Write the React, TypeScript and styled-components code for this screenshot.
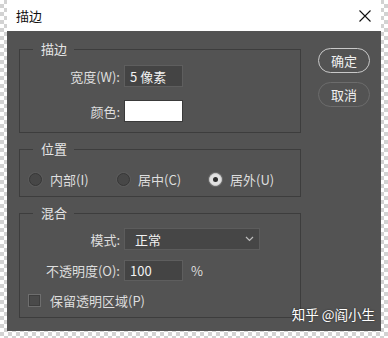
import React from "react";
import styled, { createGlobalStyle } from "styled-components";

const Global = createGlobalStyle`
  html, body { margin: 0; padding: 0; }
  body {
    width: 388px;
    height: 338px;
    overflow: hidden;
    background: repeating-conic-gradient(#d2d2d2 0 25%, #ffffff 0 50%) 0 0 / 8px 8px;
    font-family: "Noto Sans CJK SC", "Noto Sans", sans-serif;
  }
`;

const Page = styled.div`
  padding: 0 7px;
  height: 338px;
  box-sizing: border-box;
`;

const Dialog = styled.div`
  position: relative;
  width: 374px;
  height: 331px;
  background: #535353;
  display: flex;
  flex-direction: column;
`;

const TitleBar = styled.div`
  height: 31px;
  flex: none;
  background: #ffffff;
  display: flex;
  align-items: center;
  justify-content: space-between;
  padding: 0 10px 0 9px;
  font-size: 13px;
  color: #111;
`;

const CloseIcon = styled.svg`
  width: 12px;
  height: 12px;
  display: block;
`;

const Body = styled.div`
  display: flex;
  padding: 9px 11px 0 12px;
  gap: 17px;
`;

const LeftCol = styled.div`
  width: 282px;
  display: flex;
  flex-direction: column;
  gap: 7px;
`;

const Group = styled.fieldset<{ $pt: number; $pb: number }>`
  margin: 0;
  min-width: 0;
  border: 1px solid #3d3d3d;
  padding: ${(p) => p.$pt}px 0 ${(p) => p.$pb}px 0;
  display: flex;
  flex-direction: column;
  gap: 10px;
`;

const Legend = styled.legend`
  margin-left: 13px;
  padding: 0 7px 0 8px;
  font-size: 13px;
  line-height: 18px;
  color: #e6e6e6;
`;

const FieldGrid = styled.div<{ $gap: number }>`
  display: grid;
  grid-template-columns: 100px 1fr;
  column-gap: 4px;
  row-gap: ${(p) => p.$gap}px;
  align-items: center;
`;

const Control = styled.div`
  display: flex;
  align-items: center;
  gap: 8px;
`;

const Label = styled.span`
  text-align: right;
  font-size: 13px;
  color: #dedede;
  white-space: nowrap;
`;

const TextBox = styled.div<{ $h: number }>`
  width: 59px;
  height: ${(p) => p.$h}px;
  box-sizing: border-box;
  background: #444444;
  border: 1px solid #5e5e5e;
  color: #f2f2f2;
  font-size: 13px;
  padding-left: 5px;
  display: flex;
  align-items: center;
  white-space: nowrap;
`;

const Swatch = styled.div`
  width: 59px;
  height: 22px;
  box-sizing: border-box;
  background: #ffffff;
  border: 1px solid #3a3a3a;
`;

const Select = styled.div`
  width: 136px;
  height: 22px;
  box-sizing: border-box;
  background: #464646;
  border: 1px solid #5c5c5c;
  color: #f2f2f2;
  font-size: 13px;
  padding: 0 5px 0 10px;
  display: flex;
  align-items: center;
  justify-content: space-between;
`;

const Suffix = styled.span`
  font-size: 13px;
  color: #dedede;
`;

const RadioRow = styled.div`
  display: grid;
  grid-template-columns: 88px 92px auto;
  padding-left: 9px;
  height: 18px;
  align-items: center;
`;

const RadioItem = styled.label`
  display: flex;
  align-items: center;
  gap: 8px;
  font-size: 13px;
  color: #dedede;
  white-space: nowrap;
`;

const RadioCircle = styled.span<{ $on?: boolean }>`
  width: 13px;
  height: 13px;
  box-sizing: border-box;
  border-radius: 50%;
  flex: none;
  background: ${(p) => (p.$on ? "#e2e2e2" : "#474747")};
  border: 1px solid ${(p) => (p.$on ? "#cfcfcf" : "#373737")};
  box-shadow: 0 0 0 1px ${(p) => (p.$on ? "#6a6a6a" : "#5b5b5b")};
  display: flex;
  align-items: center;
  justify-content: center;
  &::after {
    content: "";
    display: ${(p) => (p.$on ? "block" : "none")};
    width: 5px;
    height: 5px;
    border-radius: 50%;
    background: #2e2e2e;
  }
`;

const CheckRow = styled.label`
  display: flex;
  align-items: center;
  gap: 9px;
  padding-left: 8px;
  height: 18px;
  font-size: 13px;
  color: #dedede;
`;

const CheckBox = styled.span`
  width: 13px;
  height: 13px;
  box-sizing: border-box;
  background: #4a4a4a;
  border: 1px solid #6e6e6e;
  box-shadow: inset 0 0 0 1px #3e3e3e;
  flex: none;
`;

const RightCol = styled.div`
  display: flex;
  flex-direction: column;
  gap: 9px;
  padding-top: 8px;
`;

const Button = styled.button<{ $primary?: boolean }>`
  width: 52px;
  height: 25px;
  box-sizing: border-box;
  border-radius: 13px;
  background: #535353;
  border: ${(p) => (p.$primary ? "1.5px solid #c9c9c9" : "1px solid #6c6c6c")};
  color: #f0f0f0;
  font-family: inherit;
  font-size: 13px;
  padding: 0;
  display: flex;
  align-items: center;
  justify-content: center;
`;

const Chevron = styled.svg`
  width: 9px;
  height: 6px;
  display: block;
`;

const Watermark = styled.div`
  position: absolute;
  right: 6px;
  bottom: 7px;
  font-size: 13.5px;
  color: #ffffff;
  text-shadow: 0 0 2px rgba(0, 0, 0, 0.6);
  white-space: nowrap;
`;

export default function App() {
  return (
    <>
      <Global />
      <Page>
        <Dialog>
          <TitleBar>
            <span>描边</span>
            <CloseIcon viewBox="0 0 12 12">
              <path d="M0.5 0.5 L11.5 11.5 M11.5 0.5 L0.5 11.5" stroke="#111" strokeWidth="1.1" fill="none" />
            </CloseIcon>
          </TitleBar>
          <Body>
            <LeftCol>
              <Group $pt={7} $pb={10}>
                <Legend>描边</Legend>
                <FieldGrid $gap={13}>
                  <Label>宽度(W):</Label>
                  <Control>
                    <TextBox $h={22}>5 像素</TextBox>
                  </Control>
                  <Label>颜色:</Label>
                  <Control>
                    <Swatch />
                  </Control>
                </FieldGrid>
              </Group>
              <Group $pt={12} $pb={8}>
                <Legend>位置</Legend>
                <RadioRow>
                  <RadioItem>
                    <RadioCircle />
                    内部(I)
                  </RadioItem>
                  <RadioItem>
                    <RadioCircle />
                    居中(C)
                  </RadioItem>
                  <RadioItem>
                    <RadioCircle $on />
                    居外(U)
                  </RadioItem>
                </RadioRow>
              </Group>
              <Group $pt={6} $pb={8}>
                <Legend>混合</Legend>
                <FieldGrid $gap={10}>
                  <Label>模式:</Label>
                  <Control>
                    <Select>
                      <span>正常</span>
                      <Chevron viewBox="0 0 9 6">
                        <path d="M1 1 L4.5 4.5 L8 1" stroke="#bdbdbd" strokeWidth="1.2" fill="none" />
                      </Chevron>
                    </Select>
                  </Control>
                  <Label>不透明度(O):</Label>
                  <Control>
                    <TextBox $h={21}>100</TextBox>
                    <Suffix>%</Suffix>
                  </Control>
                </FieldGrid>
                <CheckRow>
                  <CheckBox />
                  保留透明区域(P)
                </CheckRow>
              </Group>
            </LeftCol>
            <RightCol>
              <Button $primary>确定</Button>
              <Button>取消</Button>
            </RightCol>
          </Body>
          <Watermark>知乎 @阎小生</Watermark>
        </Dialog>
      </Page>
    </>
  );
}
